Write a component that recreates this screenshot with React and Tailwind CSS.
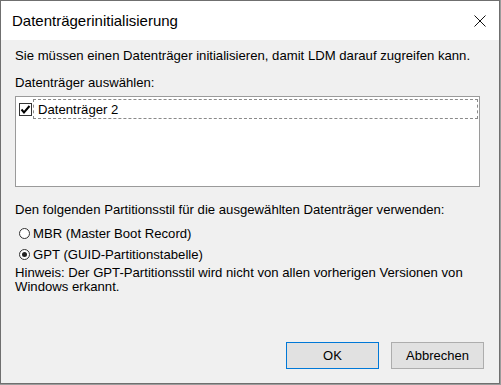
const sans = { fontFamily: '"Liberation Sans", Arial, sans-serif' };

const CloseIcon = () => (
  <svg width="12" height="12" viewBox="0 0 12 12" className="block">
    <path d="M0.5 0.5 L11.5 11.5 M11.5 0.5 L0.5 11.5" stroke="#111" strokeWidth="1" fill="none" />
  </svg>
);

const CheckBox = () => (
  <div className="w-[13px] h-[13px] border border-[#333] bg-white flex items-center justify-center shrink-0">
    <svg width="11" height="11" viewBox="0 0 11 11" className="block">
      <path d="M1.5 5.5 L4 8.5 L9.5 2" stroke="#000" strokeWidth="2" fill="none" />
    </svg>
  </div>
);

const Radio = ({ checked }) => (
  <div className="w-[11px] h-[11px] rounded-full border border-[#333] bg-white flex items-center justify-center shrink-0">
    {checked && <div className="w-[5px] h-[5px] rounded-full bg-[#222]"></div>}
  </div>
);

export default function App() {
  return (
    <div className="w-[501px] h-[385px] bg-[#9c9c9c] overflow-hidden" style={sans}>
      <div className="w-[500px] h-[384px] border border-[#6f6f6f] bg-[#f0f0f0] flex flex-col text-black">
        {/* Title bar */}
        <div className="h-[39px] bg-white flex items-center justify-between pl-[11px] pr-[13px] shrink-0">
          <span className="text-[15px] leading-[20px]">Datenträgerinitialisierung</span>
          <CloseIcon />
        </div>

        {/* Client area */}
        <div className="flex-1 flex flex-col pl-[14px] pr-[19px] text-[13.15px] leading-[15px]">
          <p className="mt-[8px] whitespace-nowrap">
            Sie müssen einen Datenträger initialisieren, damit LDM darauf zugreifen kann.
          </p>
          <p className="mt-[12px]">Datenträger auswählen:</p>

          <div className="mt-[6px] h-[91px] border border-[#9a9a9a] bg-white pt-[2px] pl-[3px] pr-[1px]">
            <div className="flex items-center gap-[1px]">
              <CheckBox />
              <div className="flex-1 h-[20px] border border-dashed border-[#8a8a8a] flex items-center pl-[4px]">
                Datenträger 2
              </div>
            </div>
          </div>

          <p className="mt-[15px] whitespace-nowrap">
            Den folgenden Partitionsstil für die ausgewählten Datenträger verwenden:
          </p>
          <label className="mt-[9px] flex items-center gap-[3px] pl-[4px]">
            <Radio />
            <span>MBR (Master Boot Record)</span>
          </label>
          <label className="mt-[6px] flex items-center gap-[3px] pl-[4px]">
            <Radio checked />
            <span>GPT (GUID-Partitionstabelle)</span>
          </label>
          <p className="mt-[4px] leading-[14px]">
            Hinweis: Der GPT-Partitionsstil wird nicht von allen vorherigen Versionen von
            <br />
            Windows erkannt.
          </p>

          <div className="flex-1"></div>
          <div className="flex justify-end gap-[12px] pb-[14px] -mr-[4px]">
            <button className="w-[93px] h-[27px] border border-[#0078d7] bg-[#e1e1e1] text-[13px]">OK</button>
            <button className="w-[93px] h-[27px] border border-[#adadad] bg-[#e1e1e1] text-[13px]">Abbrechen</button>
          </div>
        </div>
      </div>
    </div>
  );
}
